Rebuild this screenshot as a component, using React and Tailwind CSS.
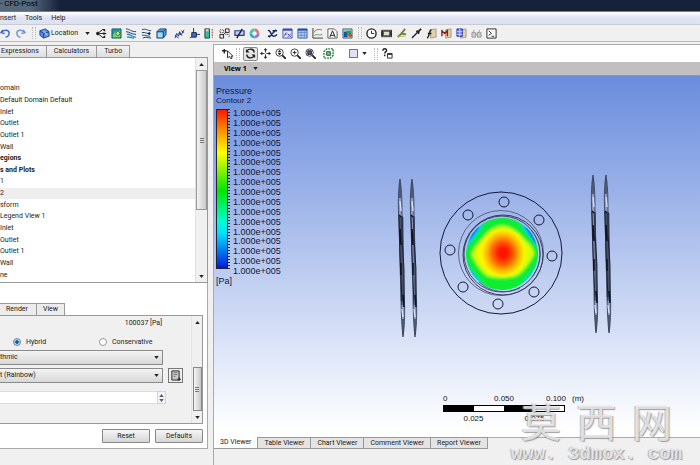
import React, { useState } from 'react';

// small 12x12 toolbar drawings
function Icon({ children }) {
  return (
    <svg viewBox="0 0 12 12" className="block h-[11px] w-[11px]" fill="none" stroke="#222" strokeWidth="1">
      {children}
    </svg>
  );
}

const insertIcons = [
  {
    name: 'Vector',
    art: (
      <>
        <circle cx="2" cy="6" r="1.500" fill="#111" />
        <path d="M3 5l4-3M3 7l4 3M4 6h5" />
        <path d="M6 1h4v3zM8 4.500l4 1.500-4 1.500zM6 11h4v-3z" fill="#222" stroke="none" />
      </>
    ),
  },
  {
    name: 'Contour',
    art: (
      <>
        <path d="M1 1h10v10h-10z" fill="#1c9a9a" stroke="#176060" />
        <path d="M2 10c0-4 3-7 8-7v7z" fill="#7ed36b" stroke="none" />
        <circle cx="7.500" cy="6" r="2.200" fill="#f2e24a" stroke="#256c8c" />
      </>
    ),
  },
  {
    name: 'Streamline',
    art: (
      <>
        <path d="M0 1c4 0 5 3 11 3M0 4c4 0 6 3 11 3" stroke="#1b2e63" />
        <path d="M1 7c4-1 5 3 10 3M1 10c3-1 4 1 8 1" stroke="#2b8bbd" strokeWidth="1.500" />
      </>
    ),
  },
  {
    name: 'Particle track',
    art: (
      <>
        <path d="M1 2c4-2 6 1 10 1M1 5c4-1 6 2 9 1M2 11c4-2 5 0 9 0" stroke="#1b2e63" />
        <path d="M1 8c4-1 5 1 9 1" stroke="#2b8bbd" strokeWidth="1.500" />
        <circle cx="9" cy="6" r="1.300" fill="#111" stroke="none" />
      </>
    ),
  },
  {
    name: 'Volume rendering',
    art: (
      <>
        <path d="M1 4l3-3h7v6l-3 4h-7z" fill="#4f9fd8" stroke="#1b4376" />
        <path d="M1 4h7v7M8 4l3-3" stroke="#1b4376" />
        <path d="M2 5h5v5h-5z" fill="#a9dcf3" stroke="none" />
      </>
    ),
  },
];

const transformIcons = [
  {
    name: 'Text',
    art: (
      <>
        <path d="M1 11l2-5 2 3 1-5 2 3 3-5" stroke="#1d2c7a" />
        <path d="M1 8l4 3M5 6l4 2M8 3l3 2" stroke="#1d2c7a" />
      </>
    ),
  },
  {
    name: 'Coordinate frame',
    art: (
      <>
        <path d="M5 5V0M5 8l-4 3M6 7h6" stroke="#1b2550" />
        <path d="M3 5h5v5h-5z" fill="#4169c8" stroke="#15224f" />
      </>
    ),
  },
  {
    name: 'Legend',
    art: (
      <>
        <path d="M1 1h5v10h-5z" fill="#36bba0" stroke="#333" />
        <path d="M2 1.500h3v2h-3z" fill="#c8e8dd" stroke="none" />
        <path d="M9 1v10" stroke="#a33" strokeDasharray="2 1" />
      </>
    ),
  },
  {
    name: 'Instance transform',
    art: (
      <>
        <path d="M7 1h4v4h-4zM1 7h4v4h-4z" />
        <path d="M1 2h4v3h-4zM7 7h4v4" strokeDasharray="1 1" />
        <path d="M4 8l4-4" />
      </>
    ),
  },
  {
    name: 'Clip plane',
    art: (
      <>
        <path d="M1 3h10v5h-10z" fill="#bcd0f5" stroke="#24409a" strokeWidth="1.300" />
        <path d="M3 11l6-10" strokeWidth="1.500" />
      </>
    ),
  },
];

const reportIcons = [
  {
    name: 'Variable',
    art: <path d="M1 3c3-2 3 6 6 6 2 0 3-1 4-2M2 10l8-8M6 3h5M1 9h3" stroke="#16295e" strokeWidth="1.500" />,
  },
  {
    name: 'Expression',
    art: (
      <>
        <path d="M1 1h10v10h-10z" fill="#e3e7fc" stroke="#4258b0" />
        <path d="M1 2h10" stroke="#3650b8" strokeWidth="2" />
        <path d="M2 9c2 0 1-4 3-4M3 7h2M6 6l4 4M10 6l-4 4" stroke="#4d45a8" />
      </>
    ),
  },
  {
    name: 'Table',
    art: (
      <>
        <path d="M1 1h10v10h-10z" fill="#b8d4fa" stroke="#3158a8" />
        <path d="M1 2h10" stroke="#284fa4" strokeWidth="2" />
        <path d="M4.500 2v9M8 2v9M1 5h10M1 8h10" stroke="#6589cc" />
      </>
    ),
  },
  {
    name: 'Chart',
    art: (
      <>
        <path d="M1 0v11h11" stroke="#333" />
        <path d="M2 5c3-5 6-3 9-3" stroke="#cf5145" />
        <path d="M2 9c3-4 5 0 9-2" stroke="#3e9d55" />
      </>
    ),
  },
  {
    name: 'Comment',
    art: (
      <>
        <path d="M1 1h7l3 3v7h-10z" fill="#fff" stroke="#555" />
        <path d="M3 10l3-7 3 7M4 8h4" stroke="#111" />
      </>
    ),
  },
  {
    name: 'Figure',
    art: (
      <>
        <path d="M1 1h10v10h-10z" fill="#99cfd5" stroke="#4c6970" />
        <path d="M2 4h4v6h-4z" fill="#174fb4" stroke="none" />
        <path d="M5 3h5v5h-5z" fill="#23a34b" stroke="none" />
        <circle cx="9" cy="8" r="2" fill="#db442f" stroke="none" />
      </>
    ),
  },
];

const toolIcons = [
  {
    name: 'Timestep selector',
    art: (
      <>
        <circle cx="6" cy="6" r="5" fill="#fff" strokeWidth="1.500" />
        <path d="M6 3v3h3" />
      </>
    ),
  },
  {
    name: 'Animation',
    art: (
      <>
        <path d="M0 2h12v8h-12z" fill="#333" stroke="none" />
        <path d="M3 4h6v4h-6z" fill="#d6e2c6" stroke="none" />
        <path d="M0 3h12M0 9h12" stroke="#999" strokeDasharray="1 1" />
      </>
    ),
  },
  {
    name: 'Quick editor',
    art: (
      <>
        <path d="M2 10l4-4 4-5M5 6l6 1" stroke="#727c3a" strokeWidth="2" />
        <path d="M1 9h9" stroke="#adb64b" />
      </>
    ),
  },
  {
    name: 'Probe',
    art: (
      <>
        <path d="M1 11l6-6" strokeWidth="1.500" />
        <path d="M6 3l3 3M8 4l3-3" strokeWidth="2" />
      </>
    ),
  },
  {
    name: 'Function calculator',
    art: (
      <>
        <path d="M4 2l7-1v9l-6 1z" fill="#e0d2a8" stroke="#a59a78" />
        <path d="M1 11c3 0 2-9 5-9M2 6h4" strokeWidth="1.500" />
      </>
    ),
  },
  {
    name: 'Macro calculator',
    art: (
      <>
        <path d="M5 2l6-1v9l-6 1z" fill="#e0d2a8" stroke="#a59a78" />
        <path d="M1 2v7M1 3l3 3 3-3v6" stroke="#8c1d1d" strokeWidth="1.500" />
      </>
    ),
  },
  {
    name: 'Mesh calculator',
    art: (
      <>
        <path d="M5 2l6-1v9l-6 1z" fill="#e0d2a8" stroke="#a59a78" />
        <path d="M1 1h6v8h-6z" fill="#6577ed" stroke="#2935a8" />
        <path d="M4 1v8M1 4h6M1 7h6" stroke="#d2d9ff" />
      </>
    ),
  },
  {
    name: 'Case comparison',
    art: <path d="M1 5h4v5h-4zM7 5h4v5h-4zM5 7h2M3 5V2M9 5V2" fill="#ccc" stroke="#999" />,
  },
  {
    name: 'Command editor',
    art: (
      <>
        <path d="M1 1h10v10h-10z" fill="#fff" />
        <path d="M3 3l3 3-3 2M6 9h3" />
      </>
    ),
  },
];

const magnifier = (
  <>
    <circle cx="5" cy="5" r="4" strokeWidth="0.900" />
    <path d="M8 8l4 4" strokeWidth="2" />
  </>
);

const zoomIcons = [
  {
    name: 'Pan',
    art: (
      <>
        <path d="M6 1v10M1 6h10" strokeDasharray="4 2" />
        <path d="M4 2.500l2-2.500 2 2.500zM4 9.500l2 2.500 2-2.500zM2.500 4l-2.500 2 2.500 2zM9.500 4l2.500 2-2.500 2z" fill="#222" stroke="none" />
      </>
    ),
  },
  { name: 'Zoom', art: <>{magnifier}<path d="M5 2l2 2.500h-4zM5 8l2-2.500h-4z" fill="#222" stroke="none" /></> },
  { name: 'Zoom in', art: <>{magnifier}<path d="M3 5h4M5 3v4" /></> },
  { name: 'Zoom box', art: <>{magnifier}<path d="M3 3h4v4h-4z" fill="#4a5790" /></> },
];

const treeItems = [
  { text: 'omain' },
  { text: 'Default Domain Default' },
  { text: 'Inlet' },
  { text: 'Outlet' },
  { text: 'Outlet 1' },
  { text: 'Wall' },
  { text: 'egions', bold: true },
  { text: 's and Plots', bold: true },
  { text: '1' },
  { text: '2', selected: true },
  { text: 'sform' },
  { text: 'Legend View 1' },
  { text: 'Inlet' },
  { text: 'Outlet' },
  { text: 'Outlet 1' },
  { text: 'Wall' },
  { text: 'ne' },
];

const viewers = ['3D Viewer', 'Table Viewer', 'Chart Viewer', 'Comment Viewer', 'Report Viewer'];
const legendValues = Array(17).fill('1.000e+005');

function ToolGroup({ items }) {
  return (
    <div className="flex gap-1">
      {items.map((item) => (
        <button key={item.name} type="button" aria-label={item.name}>
          <Icon>{item.art}</Icon>
        </button>
      ))}
    </div>
  );
}

function Grip() {
  return <span className="h-3 border-l border-dotted border-[#bbb]" />;
}

function Arrow({ up }) {
  return (
    <svg viewBox="0 0 6 4" className="h-[3px] w-[5px] shrink-0" fill="#222">
      {up ? <path d="M0 4l3-4 3 4z" /> : <path d="M0 0h6l-3 4z" />}
    </svg>
  );
}

function Dropdown({ label, value }) {
  return (
    <div className="relative w-[163px]">
      <select
        aria-label={label}
        className="block h-[15px] w-full appearance-none border border-l-0 border-[#8a8a8a] bg-linear-to-b from-[#f4f4f4] to-[#d8d8d8] pr-4 text-[7px]"
      >
        <option>{value}</option>
      </select>
      <span className="pointer-events-none absolute top-0 right-1 flex h-full items-center">
        <Arrow />
      </span>
    </div>
  );
}

// flange seen edge on, drawn from its top point
function EdgeFlange({ x, y, thick }) {
  return (
    <g transform={`translate(${x} ${y})`} fill="none" stroke="#0d1422">
      <path d="M0 0C-2 12-2 25-1 45L1 115C1 135 2 150 3 158C5 145 5 130 4 112L2 40C2 25 2 12 0 0Z" fill="#8b99c0" stroke="#2b354f" strokeWidth="0.800" />
      <path
        d={thick ? 'M-1 38L3 38 4 122 1 122Z' : 'M1 38L2 38 4 122 3 122Z'}
        fill="#47516b"
        stroke="#47516b"
        strokeWidth="0.700"
      />
      <path d="M0 3v16M3 140v16" stroke="#3e475d" strokeWidth="1.500" />
      <path d="M0 22l1 10M2 130l1 8" stroke="#d9e2f7" strokeWidth="1.300" />
      <path d="M-1 36L1 38M0 50L1 66M1 84v12M3 116l1 12" strokeWidth="1.600" />
      <path d="M2 37L2 60 4 90 4 124" strokeWidth="0.800" />
      <path d="M-1 37L0 76 1 100 2 126" strokeWidth="0.800" />
    </g>
  );
}

function Model() {
  const holes = [[504, 202], [539, 220], [552, 256], [534, 292], [498, 304], [463, 287], [450, 250], [468, 215]];
  return (
    <svg viewBox="214 76 486 361" className="absolute inset-0 h-full w-full" aria-label="Pressure contour on flange">
      <defs>
        <clipPath id="disc">
          <circle cx="502" cy="254" r="36" />
        </clipPath>
        <filter id="soft" x="-30%" y="-30%" width="160%" height="160%">
          <feGaussianBlur stdDeviation="1.500" />
        </filter>
        <radialGradient id="core">
          <stop offset="0.200" stopColor="#ff1400" />
          <stop offset="0.500" stopColor="#ff6000" />
          <stop offset="0.750" stopColor="#ffb000" />
          <stop offset="1" stopColor="#f8f400" />
        </radialGradient>
      </defs>
      <EdgeFlange x={400} y={179} thick />
      <EdgeFlange x={412} y={179} />
      <EdgeFlange x={593} y={175} />
      <EdgeFlange x={606} y={175} thick />
      <g fill="none" stroke="#121a3c">
        <circle cx="501" cy="253" r="61" />
        <circle cx="501" cy="253" r="42.500" stroke="#454c70" strokeWidth="0.800" />
        <circle cx="503" cy="255" r="40" stroke="#3d3b60" />
        <circle cx="502" cy="254" r="38" strokeWidth="0.700" />
        {holes.map(([cx, cy]) => (
          <circle key={cx} cx={cx} cy={cy} r="5" />
        ))}
      </g>
      <g clipPath="url(#disc)">
        <circle cx="502" cy="254" r="36" fill="#00d8f0" />
        <g filter="url(#soft)">
          <path d="M468 240L478 226M526 226L537 243M538 272L528 284M468 272L475 281" stroke="#0058ff" strokeWidth="3" />
          <path d="M489 215H515L524 230 534 242 542 254 534 269 525 279 514 293H490L479 279 470 269 462 254 471 242 480 230Z" fill="#10ee30" />
          <path d="M502 226C511 226 519 233 525 240C530 245 534 249 534 254C530 262 525 269 519 274C513 279 490 279 485 274C480 269 474 261 472 254C474 247 479 243 484 237C490 230 495 226 502 226Z" fill="#d8ff00" />
          <ellipse cx="502" cy="253" rx="24" ry="23" fill="#fff200" />
        </g>
        <ellipse cx="503" cy="253" rx="21" ry="23" fill="url(#core)" />
      </g>
      <path d="M531 230A36 36 0 0 1 532 277M520 288A37 37 0 0 1 479 282" fill="none" stroke="#125b78" strokeWidth="0.800" />
    </svg>
  );
}

function Legend() {
  return (
    <div className="absolute top-[11px] left-0.5 font-['Liberation_Sans',sans-serif] text-[9px] leading-[9px] text-[#10183a]">
      <div>Pressure</div>
      <div className="text-[8px]">Contour 2</div>
      <div className="mt-1 flex h-[168px] gap-[3px]">
        <div className="mb-2 flex">
          <div className="w-3 border border-[#223] bg-[linear-gradient(to_bottom,#ff1800,#ff9000_13%,#ffff00_27%,#00e600_51%,#00ffd0_70%,#00e0ff_78%,#0018e0)]" />
          <div className="w-0.5 bg-[repeating-linear-gradient(to_bottom,#223_0px,#223_1px,transparent_1px,transparent_3px)]" />
        </div>
        <div className="grid flex-1">
          {legendValues.map((value, i) => (
            <span key={i}>{value}</span>
          ))}
        </div>
      </div>
      <div>[Pa]</div>
    </div>
  );
}

function ScaleBar() {
  return (
    <div className="absolute right-[114px] bottom-[13px] w-[143px] font-['Liberation_Sans',sans-serif] text-[8px] leading-[10px] text-[#111]">
      <div className="flex">
        <span className="w-[51px]">0</span>
        <span className="w-[52px]">0.050</span>
        <span className="w-[26px]">0.100</span>
        <span>(m)</span>
      </div>
      <div className="mt-px grid h-[7px] w-[122px] grid-cols-4 border border-black">
        <span className="bg-black" />
        <span className="bg-white" />
        <span className="bg-black" />
        <span className="bg-white" />
      </div>
      <div className="mt-0.5 grid w-[122px] grid-cols-2 text-center">
        <span>0.025</span>
        <span>0.075</span>
      </div>
    </div>
  );
}

function Watermark() {
  return (
    <div className="pointer-events-none absolute right-[18px] bottom-0 text-white/70 [text-shadow:1px_1px_1px_#777a,-1px_0px_1px_#999a]">
      <div className="flex justify-between px-[10px] font-['Noto_Sans_CJK_SC',sans-serif] text-[40px] leading-[46px]">
        <span>莫</span>
        <span>西</span>
        <span>网</span>
      </div>
      <div className="font-['Liberation_Mono',monospace] text-[19px] leading-[22px] font-bold whitespace-pre">www. 3dmox. com</div>
    </div>
  );
}

function Outline() {
  return (
    <section>
      <div className="flex h-[13px] items-end pt-px">
        {['Expressions', 'Calculators', 'Turbo'].map((tab) => (
          <button
            key={tab}
            type="button"
            className="h-3 border-t border-r border-[#999] bg-linear-to-b from-[#f3f3f3] to-[#dedede] px-[7px] first:pl-px"
          >
            {tab}
          </button>
        ))}
      </div>
      <div className="flex h-[226px] border-y border-r border-[#999] bg-white">
        <ul className="mt-[25px] mb-px grid flex-1">
          {treeItems.map((item, i) => (
            <li
              key={i}
              className={`flex items-center whitespace-pre ${item.bold ? 'font-bold' : ''} ${item.selected ? 'bg-[#eeeeee]' : ''}`}
            >
              {item.text}
            </li>
          ))}
        </ul>
        <div className="flex w-3 flex-col items-center border-l border-[#e0e0e0] bg-[#f0f0f0]">
          <div className="flex h-3 items-center"><Arrow up /></div>
          <div className="flex h-[140px] w-full flex-col items-center justify-center gap-px border border-[#999] bg-linear-to-r from-[#f5f5f5] to-[#c8c8c8]">
            <span className="h-px w-1 bg-[#777]" />
            <span className="h-px w-1 bg-[#777]" />
            <span className="h-px w-1 bg-[#777]" />
          </div>
          <div className="mt-auto flex h-3 items-center"><Arrow /></div>
        </div>
      </div>
    </section>
  );
}

function Details() {
  const [mode, setMode] = useState('Hybrid');

  return (
    <section className="h-[166px] border-r border-b border-[#aaa] bg-white pt-5">
      <div className="flex h-3">
        <button type="button" className="border-t border-r border-[#999] bg-[#ececec] pr-2 pl-1.5">Render</button>
        <button type="button" className="border-t border-r border-[#999] bg-[#ececec] px-1.5">View</button>
      </div>
      <div className="mr-1 flex h-[109px] border border-l-0 border-[#999] bg-[#f0f0f0]">
        <div className="flex-1">
          <div className="mt-px w-[162px] text-right leading-3">100037 [Pa]</div>
          <div className="mt-2 flex h-[10px] items-center">
            {['Hybrid', 'Conservative'].map((name) => (
              <label key={name} className="flex w-[86px] items-center gap-[5px] pl-[13px]">
                <input
                  type="radio"
                  name="mode"
                  checked={mode === name}
                  onChange={() => setMode(name)}
                  className="m-0 h-2 w-2 appearance-none rounded-full border border-[#999] bg-white checked:border-[#5b87ac] checked:bg-[radial-gradient(#155a90_35%,#b5dcf4_50%)]"
                />
                {name}
              </label>
            ))}
          </div>
          <div className="mt-[3px]">
            <Dropdown label="Color scale" value="thmic" />
          </div>
          <div className="mt-[3px] flex gap-[5px]">
            <Dropdown label="Color map" value="t (Rainbow)" />
            <button type="button" aria-label="Edit color map" className="flex h-[15px] w-[15px] items-center justify-center border border-[#777] bg-[#eee]">
              <Icon>
                <path d="M2 1h8v10h-8z" fill="#c8c8c8" />
                <path d="M4 3h4M4 5h4M4 7h2" stroke="#777" />
                <path d="M8 10h4M10 8v4" />
              </Icon>
            </button>
          </div>
          <div className="mt-2 flex h-[13px] w-[166px]">
            <input aria-label="Number of contours" className="min-w-0 flex-1 border-y border-[#ddd] bg-white" />
            <button type="button" aria-label="Step value" className="flex w-[9px] flex-col items-center justify-center gap-0.5 border border-[#c4c8da] bg-[#f4f5fc] opacity-70">
              <Arrow up />
              <Arrow />
            </button>
          </div>
        </div>
        <div className="flex w-[11px] flex-col items-center border-l border-[#e4e4e4]">
          <div className="flex h-3 items-center"><Arrow up /></div>
          <div className="mt-auto flex h-11 w-[9px] flex-col items-center justify-center gap-px border border-[#888] bg-linear-to-r from-[#f5f5f5] to-[#c8c8c8]">
            <span className="h-px w-1 bg-[#777]" />
            <span className="h-px w-1 bg-[#777]" />
            <span className="h-px w-1 bg-[#777]" />
          </div>
          <div className="flex h-3 items-center"><Arrow /></div>
        </div>
      </div>
      <div className="mt-[5px] mr-1 flex justify-end gap-[5px]">
        {['Reset', 'Defaults'].map((name) => (
          <button key={name} type="button" className="h-[14px] w-12 rounded-[1px] border border-[#888] bg-linear-to-b from-[#f6f6f6] to-[#d6d6d6]">
            {name}
          </button>
        ))}
      </div>
    </section>
  );
}

function App() {
  const [viewer, setViewer] = useState('3D Viewer');

  return (
    <div className="relative flex min-h-screen flex-col overflow-hidden bg-[#f0f0f0] font-[Roboto,sans-serif] text-[7px] leading-[9px] text-[#222]">
      <header className="h-3 border-b border-[#777b8c] bg-[linear-gradient(to_right,#56697d,#56697d_30px,#18213a_60px)] text-[8px] leading-[8px] text-black">
        - CFD-Post
      </header>
      <nav className="flex h-[13px] items-center gap-[9px] border-b border-[#c8cad4] bg-linear-to-b from-white via-[#dfe3f3] to-[#dde2f2]">
        <button type="button">nsert</button>
        <button type="button">Tools</button>
        <button type="button">Help</button>
      </nav>

      <div className="flex h-[17px] items-center border-b border-[#bbb]">
        <div className="flex gap-1">
          <button type="button" aria-label="Undo">
            <Icon><path d="M3 2L1 5l4 1M1 5c4-4 9-3 9 1 0 2-2 4-4 4" stroke="#3c68c4" strokeWidth="1.500" /></Icon>
          </button>
          <button type="button" aria-label="Redo">
            <Icon><path d="M9 2l2 3-4 1M11 5c-4-4-9-3-9 1 0 2 2 4 4 4" stroke="#6f91d8" strokeWidth="1.500" /></Icon>
          </button>
        </div>
        <div className="ml-1.5 flex gap-0.5">
          <Grip />
          <Grip />
        </div>
        <button type="button" className="ml-[3px] flex items-center gap-px">
          <Icon>
            <path d="M1 3l6-2 4 3v5l-6 2-4-3z" fill="#5c8ee8" stroke="#1d3f99" />
            <path d="M1 3l4 3v5M5 6l6-2" stroke="#1d3f99" />
            <path d="M5 3l4 5" stroke="#e8f0ff" />
          </Icon>
          Location
          <span className="ml-1.5"><Arrow /></span>
        </button>
        <div className="ml-[6px] flex items-center gap-[7px]">
          <ToolGroup items={insertIcons} />
          <div className="flex gap-1">
            <ToolGroup items={transformIcons} />
            <button type="button" aria-label="Color map">
              <svg viewBox="0 0 12 12" className="block h-[11px] w-[11px]" fill="none" strokeWidth="3">
                <path d="M6 2a4 4 0 0 1 4 4" stroke="#e57085" />
                <path d="M10 6a4 4 0 0 1-4 4" stroke="#8b78dd" />
                <path d="M6 10a4 4 0 0 1-4-4" stroke="#35a9d4" />
                <path d="M2 6a4 4 0 0 1 4-4" stroke="#42c59b" />
              </svg>
            </button>
          </div>
          <ToolGroup items={reportIcons} />
        </div>
        <div className="mr-1 ml-[5px] flex gap-0.5">
          <Grip />
          <Grip />
        </div>
        <ToolGroup items={toolIcons} />
      </div>

      <main className="mt-0.5 flex flex-1">
        <aside className="w-[208px] shrink-0">
          <Outline />
          <Details />
        </aside>

        <section className="ml-[5px] flex min-w-0 flex-1 flex-col border-t border-l border-[#aaa]">
          <div className="flex h-[17px] items-center bg-white pl-2">
            <button type="button" aria-label="Select">
              <Icon>
                <path d="M0 3h5M2.500 1v5" strokeWidth="1.500" />
                <path d="M6 3v8l2-2 2 3 1-1-1-2h2z" fill="#fff" />
              </Icon>
            </button>
            <div className="ml-[3px] flex gap-0.5">
              <Grip />
              <Grip />
            </div>
            <button type="button" aria-label="Rotate" className="ml-[3px] flex h-[14px] w-[15px] items-center justify-center rounded-[2px] border border-[#888] bg-[#e6e6e6]">
              <Icon>
                <path d="M10 5c0-4-5-5-8-2M2 7c0 4 5 5 8 2" strokeWidth="1.500" />
                <path d="M1 1v4h4zM11 11v-4h-4z" fill="#222" stroke="none" />
              </Icon>
            </button>
            <div className="ml-0.5 flex"><ToolGroup items={zoomIcons} /></div>
            <button type="button" aria-label="Highlight" className="ml-[7px]">
              <Icon>
                <path d="M1 4l3-3h7v7l-3 3h-7z" stroke="#237a3a" strokeWidth="1.500" strokeDasharray="2 1" />
                <path d="M4 4h4v4h-4z" fill="#7cc48a" stroke="#135e27" />
              </Icon>
            </button>
            <button type="button" aria-label="Viewport layout" className="ml-[15px] flex items-center gap-1">
              <span className="h-[9px] w-[9px] border border-[#6c70a0] bg-[#dfe1f6]" />
              <Arrow />
            </button>
            <div className="mr-1 ml-[7px] flex gap-0.5">
              <Grip />
              <Grip />
            </div>
            <button type="button" aria-label="Help">
              <Icon>
                <path d="M1 3c0-3 4-3 4 0 0 1-2 1-2 3M3 7v2" strokeWidth="1.500" />
                <path d="M6 6h5v5h-5zM6 7h5" />
              </Icon>
            </button>
          </div>
          <button type="button" className="flex h-[14px] items-center gap-1.5 border-b border-[#8d98b8] bg-[#c1bfc0] pl-[10px] font-['Open_Sans',sans-serif] font-bold text-black">
            View 1
            <Arrow />
          </button>
          <div className="relative flex-1 bg-[linear-gradient(to_bottom,#6a8cdd,#ffffff_98%)]">
            <Model />
            <Legend />
            <ScaleBar />
          </div>
          <div className="mb-4 flex h-3">
            {viewers.map((name) => (
              <button
                key={name}
                type="button"
                onClick={() => setViewer(name)}
                className={`border-r border-b border-[#999] px-1.5 whitespace-nowrap ${viewer === name ? 'bg-white' : 'border-t bg-[#e4e4e4]'}`}
              >
                {name}
              </button>
            ))}
            <span className="flex-1 border-t border-[#aaa]" />
          </div>
        </section>
      </main>
      <Watermark />
    </div>
  );
}

export default App;
